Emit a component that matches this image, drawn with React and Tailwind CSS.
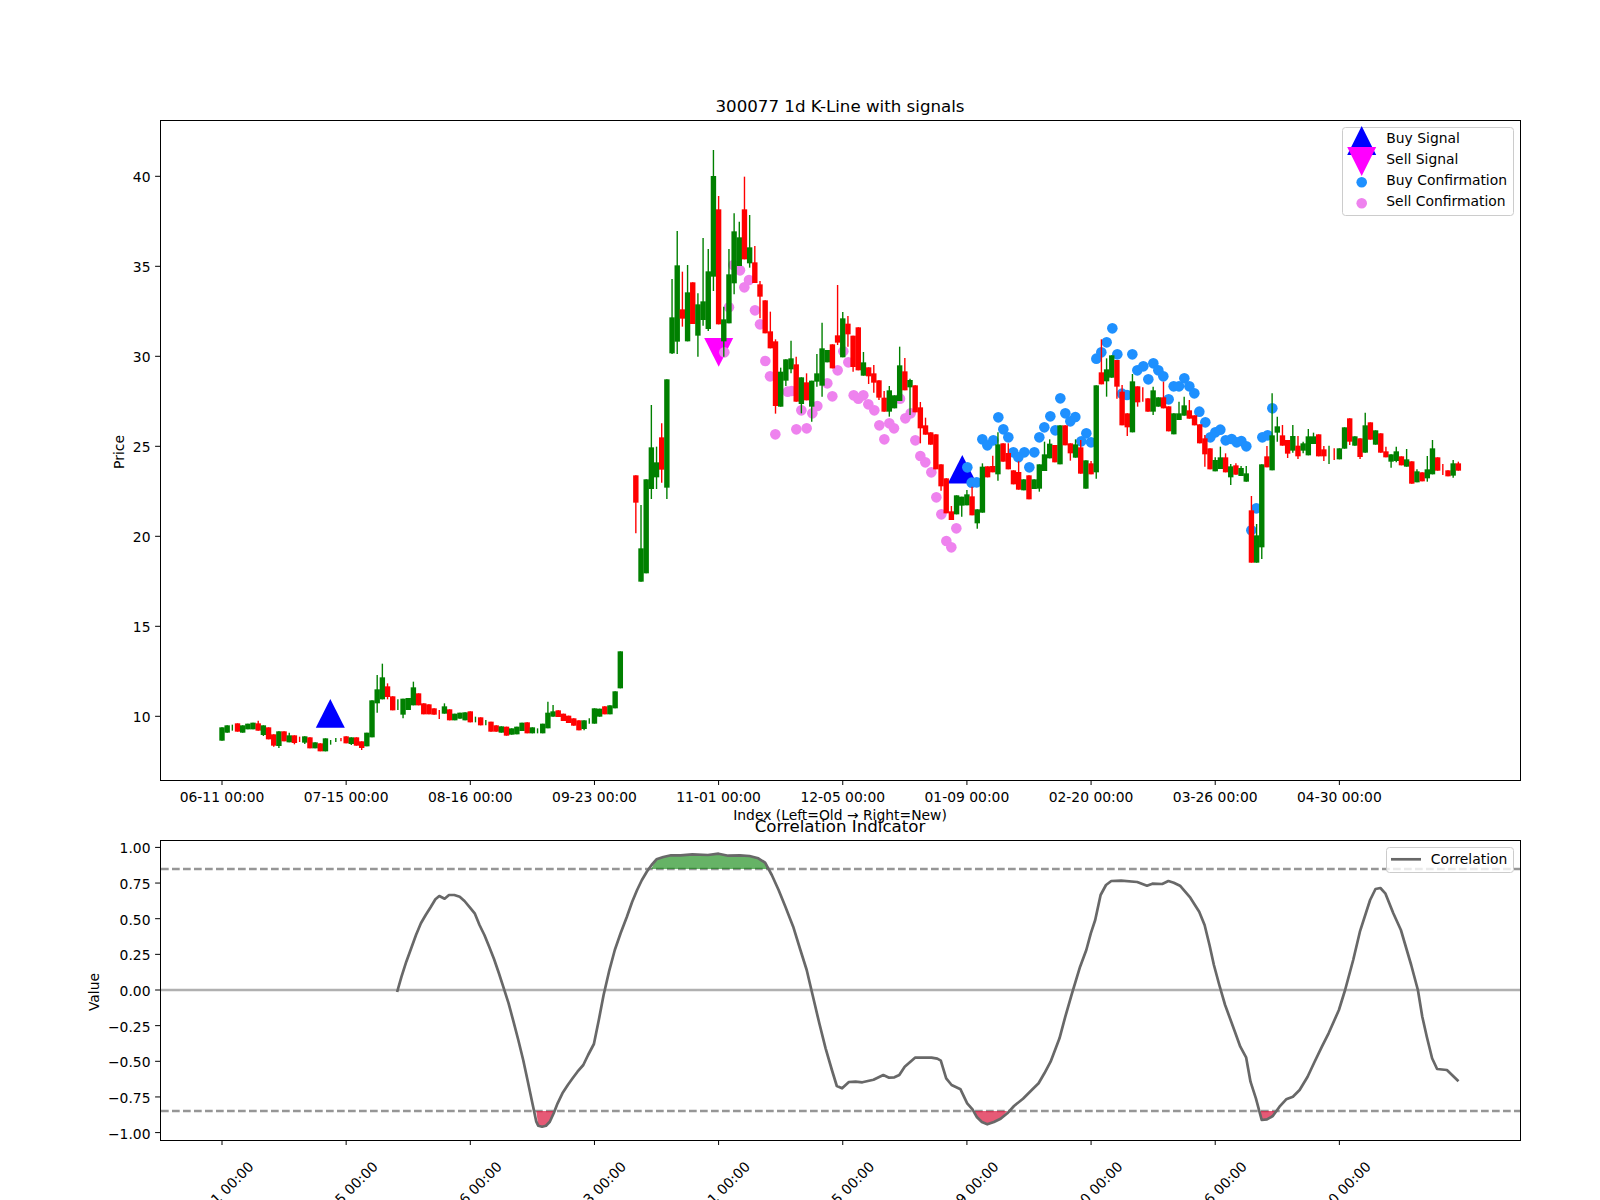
const X0 = 222;
const STEP = 5.173;
const barX = (i) => X0 + STEP * i;

// [kind, bodyTop, bodyBottom, wickTop, wickBottom]; kind g/r = wick only
const rows = (start, offset, list) =>
  list.map(([k, t, b, wt, wb], n) => ({
    i: start + n,
    kind: k,
    top: offset + t / 3,
    bottom: offset + b / 3,
    wt: offset + (wt ?? t) / 3,
    wb: offset + (wb ?? b) / 3,
  }));

const CANDLES = [
  ...rows(0, 620, [
    ["G",322,362],["G",316,338],["g",314,332],["R",310,335],["G",316,338],["G",311,328],["G",308,328],["R",310,332,302],
    ["G",316,345,316,348],["R",322,358],["R",343,377,343,380],["G",334,378,334,384],["R",334,364],["G",346,367,338],["R",346,369,346,373],["r",350,366],
    ["G",349,368,349,372],["R",352,385],["G",367,385],["R",370,394],["G",355,394],["g",360,374],["g",354,366],["r",354,364],
    ["R",349,370],["G",352,372,352,375],["R",352,377],["R",364,384,364,390],["G",338,379],["G",241,352],["G",208,250,165,278],["G",172,238,131],
    ["R",199,231,190,238],["R",229,271],["g",238,270],["G",236,284,236,295],["G",234,270],["G",202,256,185],["R",220,256],["R",250,283],
    ["R",253,283],["R",265,284],["r",270,297],["G",259,281,250],["R",268,301],["G",281,301],["G",278,296],["G",277,301],
    ["R",274,307],["g",290,307],["R",292,316],["g",300,316],["R",305,335],["R",316,335],["G",319,338],["R",320,347],
    ["G",325,344],["G",320,343],["G",308,333],["R",307,340],["G",322,340],["g",325,340],["G",311,340],["G",278,325,245],
    ["G",274,290,255],["R",271,291],["R",281,303],["R",287,309],["R",295,317],["R",301,331],["G",301,327,301,331],["g",295,311],
    ["G",265,311],["G",266,290],["R",259,283],["G",256,283],["G",214,265],["G",94,205],
  ]),
  ...rows(80, 420, [
    ["R",166,248,166,340],["G",385,485,255],["G",178,460],["G",82,207,-45,237],["G",127,172,80,207],["R",52,149,10,188],
  ]),
  ...rows(86, 130, [
    ["G",748,1073,748,1107],["G",562,670,447,672],["G",406,635,303,672],["R",538,566,425,590],["G",487,634,405],["R",457,582],["G",523,617,490,680],["G",514,570,324,587],
    ["G",424,597,357,603],["G",138,440,60,483],["R",238,583,198],["G",568,634,530,680],["G",433,580,357],["G",304,460,250,493],["G",322,408,275],["R",238,388,140],
    ["G",352,400,255,413],["R",397,459,348],["R",463,500,453,565],["R",511,610],["R",604,655,545],["R",634,828,628,851],["G",725,830,713],["G",688,752,688,768],
    ["G",685,718,632,730],["R",703,815,680],["G",742,822,742,850],["R",757,811,730],["G",752,830,752,875],["G",730,755,672,770],["G",655,767,578,800],["G",660,697],
    ["R",643,715],["R",616,638,465,645],["G",565,682,546],["R",581,613,558,650],["R",617,711,617,725],["R",592,721],["G",697,737,666],["R",712,739,712,762],
    ["R",730,758,705,788],["R",751,803,751,810],["R",803,845,783],
  ]),
  ...rows(129, 300, [
    ["G",271,335,258,350],["G",286,325],["G",196,303,140],["R",214,271,174],["G",240,262,236,345],["R",256,337],["R",322,385,306,430],["R",376,404,353],
    ["R",397,434],["R",403,508],["R",493,559,493,572],["R",535,640],["R",634,660,618],["G",586,643],["G",590,617,590,650],["G",583,616,570],
    ["R",589,646,560],["G",628,670,628,686],["G",500,638,490],["R",499,532],["R",498,517,467],["G",433,523,397,542],["R",430,485],["R",459,508,430],
    ["R",511,553],["R",516,569,484],["G",538,571],["R",526,598],["G",538,567],["G",493,566,493,575],["G",463,513,425],["G",431,475,418],
    ["R",435,487],["G",376,493],["R",376,436],["R",430,460,430,482],["G",433,473,418],["R",442,521,420],["G",481,566],["R",490,523,483],
    ["G",256,517,256,536],["R",217,253,118],["G",208,244,175,290],["G",166,233],["R",180,260,180,296],["R",275,376,255],["R",340,382,340,408],["G",244,397,222],
    ["R",259,307,259,320],["r",262,305],["R",295,335],["G",271,335,260,345],["G",292,320],["R",292,325,245],["R",319,394],["G",340,403],
    ["G",340,360,305],["G",316,347,290],["R",331,356,300],["R",346,376],["R",373,430],
  ]),
  ...rows(190, 380, [
    ["R",175,223,165,260],["R",205,268],["G",240,274,232],["G",232,267,200],["R",232,277,220],["G",259,292,252,315],["R",256,284,250],["G",264,288,258],
    ["G",280,305,258],["R",391,548,348],["G",466,548,432],["G",253,502,253,537],["R",229,262,198],["G",166,271,40],["G",139,158,110,185],["R",166,197,135],
    ["R",180,221,180,234],["G",168,212,135,218],["R",197,229,168,237],["G",190,212,185,220],["G",169,226,147],["G",169,192,158],["R",163,229],["R",208,229,198,243],
    ["g",197,252],["r",205,240],["G",205,238],["G",142,206],["R",115,185,115,195],["G",169,197],["R",175,231,175,237],["G",136,218,98],
    ["R",127,179],["G",151,194],["R",160,218],["R",214,232,200],["G",223,245,223,263],["G",214,243,200,247],["R",229,256],["G",238,260,207],
    ["R",244,311],["G",274,307,268],["R",277,304],["G",268,295,228,305],["G",205,283,180],["R",232,272],["r",252,285],["R",271,289],
    ["G",250,287,240,293],["R",250,272,245],
  ]),
];

const pts = (ox, oy, list) => list.map(([x, y]) => [ox + x / 3, oy + y / 3]);

const PINK = [
  ...pts(610, 130, [[343,667],[390,421],[403,472],[417,450],[370,405],[357,532],[435,541],[450,583],[466,693],[480,739],[533,785],[545,783],[574,841],[607,850],[622,828],[652,760],[667,799],[683,721],[700,664],[715,697],[731,796],[745,806],[760,796],[775,823],[793,841]]),
  ...pts(610, 420, [[496,43],[559,28],[590,25],[808,16],[838,10],[852,25],[823,58]]),
  ...pts(880, 300, [[60,296],[76,355],[92,340],[106,421],[121,468],[136,487],[154,517],[169,592],[184,643],[229,685],[199,723],[214,742]]),
];

const BLUE = [
  ...pts(880, 300, [[262,502],[275,548],[290,547],[307,418],[322,436],[340,421],[355,352],[370,388],[385,412],[400,457],[415,472],[433,457],[463,457],[448,502],[478,412],[493,382],[511,349],[526,391],[541,295],[556,340],[571,364],[586,351],[604,424],[619,400],[633,427],[649,176],[664,157],[680,127],[697,85],[712,163],[726,281],[741,285],[757,163],[772,211],[790,199],[805,238],[820,190],[835,211],[850,229],[866,298],[881,259],[897,259],[913,235],[928,259],[943,280],[958,335]]),
  ...pts(1180, 380, [[76,127],[91,172],[106,157],[121,149],[137,181],[155,177],[170,187],[184,183],[199,199],[247,172],[263,166],[277,85],[229,385],[214,451]]),
];

const z7 = (list) => list.map(([x, y]) => [100 + x / 2.063, 820 + y / 3]);
const z8 = (list) => list.map(([x, y]) => [840 + x / 2.241, 820 + y / 3]);
const toPoints = (list) => list.map(([x, y]) => `${x.toFixed(1)},${y.toFixed(1)}`).join(" ");

const LINE = [
  ...z7([[613,516],[622,470],[632,425],[642,385],[652,345],[662,310],[672,285],[682,262],[692,238],[700,228],[711,236],[720,225],[731,225],[742,230],[752,243],[763,262],[773,280],[783,315],[793,345],[803,380],[813,418],[823,460],[833,505],[843,550],[853,605],[863,660],[873,720],[882,780],[892,850],[900,905],[904,917],[912,920],[920,917],[928,905],[936,880],[944,850],[954,820],[965,795],[975,775],[985,755],[997,735],[1007,705],[1019,672],[1029,600],[1039,525],[1050,455],[1062,390],[1074,340],[1087,290],[1098,245],[1108,210],[1118,180],[1128,155],[1138,135],[1148,118],[1162,111],[1178,106],[1198,106],[1222,103],[1254,105],[1276,101],[1296,107],[1320,106],[1340,108],[1358,115],[1372,128],[1386,165],[1400,210],[1414,260],[1430,320],[1445,390],[1458,450],[1470,525],[1484,610],[1497,685],[1510,750],[1520,798],[1531,805]]),
  ...z8([[20,786],[35,785],[50,787],[75,779],[97,765],[110,773],[122,772],[133,765],[145,740],[168,713],[205,713],[218,716],[226,722],[238,775],[250,795],[270,808],[285,850],[297,868],[307,892],[318,906],[330,913],[345,906],[360,896],[375,880],[390,858],[410,836],[428,812],[445,790],[458,760],[472,725],[492,655],[505,590],[520,520],[538,440],[552,390],[562,340],[572,300],[584,225],[596,195],[608,183],[630,182],[666,186],[688,197],[700,191],[722,192],[736,183],[748,188],[762,197],[785,233],[805,275],[817,315],[828,375],[838,435],[850,495],[863,555],[885,635],[897,680],[910,712],[920,785],[932,835],[945,900],[957,898],[970,888],[985,860],[1000,838],[1015,830],[1030,810],[1048,770],[1062,730],[1080,680],[1095,640],[1118,570],[1132,510],[1150,420],[1165,335],[1188,240],[1200,207],[1211,204],[1222,220],[1240,280],[1257,330],[1280,435],[1295,510],[1305,590],[1315,650],[1327,715],[1338,747],[1360,750],[1386,784]]),
];

const GREEN_FILL = z7([[1137,147],[1148,118],[1162,111],[1178,106],[1198,106],[1222,103],[1254,105],[1276,101],[1296,107],[1320,106],[1340,108],[1358,115],[1372,128],[1378,147]]);
const RED_FILLS = [
  z7([[900,873],[904,917],[912,920],[920,917],[928,905],[936,873]]),
  z8([[302,873],[307,892],[318,906],[330,913],[345,906],[360,896],[375,873]]),
  z8([[942,873],[945,900],[957,898],[970,888],[978,873]]),
];

const DATES = ["06-11 00:00","07-15 00:00","08-16 00:00","09-23 00:00","11-01 00:00","12-05 00:00","01-09 00:00","02-20 00:00","03-26 00:00","04-30 00:00"];
const PRICES = [10,15,20,25,30,35,40];
const VALUES = ["1.00","0.75","0.50","0.25","0.00","\u22120.25","\u22120.50","\u22120.75","\u22121.00"];
const priceY = (p) => 716.3 - (p - 10) * 18;

const Up = ({ cx, apex, base }) => <polygon points={`${cx},${apex} ${cx + 14.5},${base} ${cx - 14.5},${base}`} fill="#0000ff" />;
const Down = ({ cx, apex, base }) => <polygon points={`${cx - 14.5},${base} ${cx + 14.5},${base} ${cx},${apex}`} fill="#ff00ff" />;

const Dot = ({ p, color }) => <circle cx={p[0]} cy={p[1]} r="5.3" fill={color} />;

function Candle({ c }) {
  const x = barX(c.i);
  const color = c.kind === "G" || c.kind === "g" ? "#008000" : "#ff0000";
  const wickOnly = c.kind === "g" || c.kind === "r";
  return (
    <g>
      <line x1={x} x2={x} y1={c.wt} y2={c.wb} stroke={color} strokeWidth="1.4" />
      {!wickOnly && <rect x={x - 2.7} y={c.top} width="5.4" height={c.bottom - c.top} fill={color} />}
    </g>
  );
}

function PriceChart() {
  return (
    <svg viewBox="0 0 1600 825" className="block w-[1600px] h-[825px] overflow-hidden text-[13.89px] fill-black">
      <text x="840" y="112" textAnchor="middle" className="text-[16.67px]">300077 1d K-Line with signals</text>
      <Up cx={330.3} apex={699} base={727.7} />
      <Up cx={962.3} apex={455} base={483.5} />
      <Down cx={718.7} apex={366.7} base={338} />
      {PINK.map((p, i) => <Dot key={i} p={p} color="#ee82ee" />)}
      {BLUE.map((p, i) => <Dot key={i} p={p} color="#1e90ff" />)}
      {CANDLES.map((c) => <Candle key={c.i} c={c} />)}
      <rect x="160.5" y="120.5" width="1360" height="660" fill="none" stroke="#000" strokeWidth="1" />
      {PRICES.map((p) => (
        <g key={p}>
          <line x1="155.1" x2="160" y1={priceY(p)} y2={priceY(p)} stroke="#000" strokeWidth="1" />
          <text x="150.5" y={priceY(p) + 5.2} textAnchor="end">{p}</text>
        </g>
      ))}
      {DATES.map((d, k) => (
        <g key={d}>
          <line x1={barX(k * 24)} x2={barX(k * 24)} y1="780" y2="785" stroke="#000" strokeWidth="1" />
          <text x={barX(k * 24)} y="801.5" textAnchor="middle">{d}</text>
        </g>
      ))}
      <text x="840" y="820" textAnchor="middle">Index (Left=Old → Right=New)</text>
      <text transform="translate(124 452) rotate(-90)" textAnchor="middle">Price</text>
      <rect x="1342.5" y="127.5" width="171" height="88" rx="3" fill="#fff" fillOpacity="0.8" stroke="#ccc" strokeWidth="1" />
      <Up cx={1361.7} apex={126} base={155} />
      <Down cx={1361.7} apex={176} base={147} />
      <Dot p={[1361.7, 182.3]} color="#1e90ff" />
      <Dot p={[1361.7, 203.3]} color="#ee82ee" />
      <text x="1386.3" y="143">Buy Signal</text>
      <text x="1386.3" y="164">Sell Signal</text>
      <text x="1386.3" y="185">Buy Confirmation</text>
      <text x="1386.3" y="206">Sell Confirmation</text>
    </svg>
  );
}

function CorrelationChart() {
  return (
    <svg viewBox="0 825 1600 375" className="block w-[1600px] h-[375px] overflow-visible text-[13.89px] fill-black">
      <text x="840" y="832" textAnchor="middle" className="text-[16.67px]">Correlation Indicator</text>
      <line x1="160" x2="1520" y1="990" y2="990" stroke="#b0b0b0" strokeWidth="2.5" />
      <line x1="161" x2="1520" y1="869" y2="869" stroke="#969696" strokeWidth="2.5" strokeDasharray="7.7 3.3" />
      <line x1="161" x2="1520" y1="1111" y2="1111" stroke="#969696" strokeWidth="2.5" strokeDasharray="7.7 3.3" />
      <polygon points={toPoints(GREEN_FILL)} fill="#008000" fillOpacity="0.6" />
      {RED_FILLS.map((f, i) => <polygon key={i} points={toPoints(f)} fill="#dc143c" fillOpacity="0.7" />)}
      <polyline points={toPoints(LINE)} fill="none" stroke="#686868" strokeWidth="2.7" strokeLinejoin="round" />
      <rect x="160.5" y="840.5" width="1360" height="300" fill="none" stroke="#000" strokeWidth="1" />
      {VALUES.map((v, n) => (
        <g key={v}>
          <line x1="155.1" x2="160" y1={990 - (4 - n) * 35.65} y2={990 - (4 - n) * 35.65} stroke="#000" strokeWidth="1" />
          <text x="150.5" y={990 - (4 - n) * 35.65 + 6} textAnchor="end">{v}</text>
        </g>
      ))}
      {DATES.map((d, k) => (
        <g key={d}>
          <line x1={barX(k * 24)} x2={barX(k * 24)} y1="1140" y2="1145" stroke="#000" strokeWidth="1" />
          <text transform={`translate(${barX(k * 24) - 1} 1194) rotate(-45)`} textAnchor="middle" dominantBaseline="central">{d}</text>
        </g>
      ))}
      <text transform="translate(99 992) rotate(-90)" textAnchor="middle">Value</text>
      <rect x="1386.5" y="847.5" width="127" height="25" rx="3" fill="#fff" fillOpacity="0.8" stroke="#ccc" strokeWidth="1" />
      <line x1="1391" x2="1421" y1="859.3" y2="859.3" stroke="#686868" strokeWidth="2.7" />
      <text x="1430.8" y="864">Correlation</text>
    </svg>
  );
}

export default function App() {
  return (
    <div className="w-[1600px] h-[1200px] bg-white overflow-hidden font-['DejaVu_Sans',sans-serif]">
      <PriceChart />
      <CorrelationChart />
    </div>
  );
}
